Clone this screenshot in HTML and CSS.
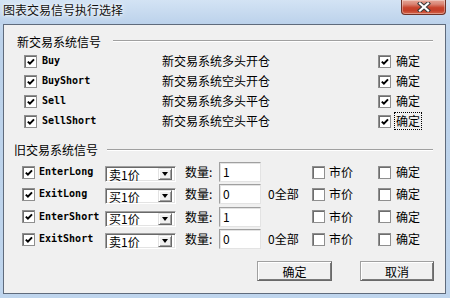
FILE: index.html
```html
<!DOCTYPE html>
<html>
<head>
<meta charset="utf-8">
<link rel="stylesheet" href="styles.css">
</head>
<body>
<div class="window">
  <div class="titlebar">
    <span class="title">图表交易信号执行选择</span>
    <div class="close">
      <svg width="14" height="10" viewBox="0 0 14 10"><path d="M3 1.5 L11 8.5 M11 1.5 L3 8.5" stroke="#3b3b3b" stroke-width="4.2" stroke-linecap="square" fill="none"/><path d="M3 1.5 L11 8.5 M11 1.5 L3 8.5" stroke="#fff" stroke-width="2.2" stroke-linecap="square" fill="none"/></svg>
    </div>
  </div>
  <div class="client">
    <div class="group-head g1"><span class="glabel">新交易系统信号</span><span class="gline"></span></div>
    <div class="new-rows">
      <span class="cb on"></span><span class="mono">Buy</span><span>新交易系统多头开仓</span><span class="cb on"></span><span>确定</span>
      <span class="cb on"></span><span class="mono">BuyShort</span><span>新交易系统空头开仓</span><span class="cb on"></span><span>确定</span>
      <span class="cb on"></span><span class="mono">Sell</span><span>新交易系统多头平仓</span><span class="cb on"></span><span>确定</span>
      <span class="cb on"></span><span class="mono">SellShort</span><span>新交易系统空头平仓</span><span class="cb on"></span><span class="focus">确定</span>
    </div>
    <div class="group-head g2"><span class="glabel">旧交易系统信号</span><span class="gline"></span></div>
    <div class="old-rows">
      <span class="cb on"></span><span class="mono">EnterLong</span>
      <span class="combo"><span class="ctext">卖1价</span><span class="cbtn"></span></span>
      <span class="qlabel">数量:</span><span class="edit">1</span><span></span>
      <span class="cb"></span><span>市价</span><span class="cb"></span><span>确定</span>

      <span class="cb on"></span><span class="mono">ExitLong</span>
      <span class="combo"><span class="ctext">买1价</span><span class="cbtn"></span></span>
      <span class="qlabel">数量:</span><span class="edit">0</span><span class="all">0全部</span>
      <span class="cb"></span><span>市价</span><span class="cb"></span><span>确定</span>

      <span class="cb on"></span><span class="mono">EnterShort</span>
      <span class="combo"><span class="ctext">买1价</span><span class="cbtn"></span></span>
      <span class="qlabel">数量:</span><span class="edit">1</span><span></span>
      <span class="cb"></span><span>市价</span><span class="cb"></span><span>确定</span>

      <span class="cb on"></span><span class="mono">ExitShort</span>
      <span class="combo"><span class="ctext">卖1价</span><span class="cbtn"></span></span>
      <span class="qlabel">数量:</span><span class="edit">0</span><span class="all">0全部</span>
      <span class="cb"></span><span>市价</span><span class="cb"></span><span>确定</span>
    </div>
    <div class="buttons">
      <span class="btn">确定</span>
      <span class="btn">取消</span>
    </div>
  </div>
</div>
</body>
</html>
```
FILE: styles.css
```css
* { box-sizing: border-box; }
html, body { margin: 0; padding: 0; }
body {
  width: 450px; height: 298px; overflow: hidden;
  font-family: "Noto Sans CJK SC", "Liberation Sans", sans-serif;
  font-size: 12px; color: #000;
}
.window {
  width: 450px; height: 298px;
  display: flex; flex-direction: column;
  background: linear-gradient(to bottom, #c9dcf1 0px, #bcd2ea 40px, #bfd5ed 100%);
}
.titlebar {
  height: 24px; flex: none;
  display: flex; justify-content: space-between; align-items: flex-start;
  background: linear-gradient(to bottom, #d3e3f4, #bcd2eb);
}
.title {
  padding: 3px 0 0 3px;
  line-height: 14px;
  color: #111;
  text-shadow: 0 0 6px #fff, 0 0 3px #fff;
}
.close {
  width: 45px; height: 15px; margin-right: 4px;
  border: 1px solid #6e3227; border-top: none;
  border-radius: 0 0 4px 4px;
  background: linear-gradient(to bottom, #e6a898 0%, #d98474 30%, #c8432c 55%, #c4402a 75%, #d4654a 100%);
  display: flex; align-items: center; justify-content: center;
  box-shadow: inset 0 0 0 1px rgba(255,255,255,0.35);
}
.client {
  flex: 1;
  margin: 0 4px 4px 3px;
  border: 1px solid #5f6b7c;
  background: #f0f0f0;
  display: flex; flex-direction: column;
}
.group-head {
  display: flex; align-items: center; height: 12px; line-height: 12px;
}
.g1 { margin-top: 11px; padding-left: 13px; }
.g2 { margin-top: 13px; padding-left: 10px; }
.gline {
  flex: 1; height: 2px;
  border-top: 1px solid #a0a0a0; border-bottom: 1px solid #fff;
  margin-right: 12px;
}
.g1 .gline { margin-left: 12px; margin-top: -3px; }
.g2 .gline { margin-left: 9px; margin-top: -1px; }

.new-rows {
  margin-top: 3px; padding-left: 20px;
  display: grid;
  grid-template-columns: 18px 120px 216px 18px auto;
  grid-auto-rows: 20px;
  align-items: center;
  justify-items: start;
  line-height: 14px;
}
.mono {
  font-family: "DejaVu Sans Mono", "Liberation Mono", monospace;
  font-weight: bold; font-size: 10px;
}
.cb {
  width: 13px; height: 13px;
  border: 1px solid #8f8f8f;
  box-shadow: inset 1px 1px 0 #6d6d6d;
  background: #fff;
  position: relative;
}
.cb.on::after {
  content: "";
  position: absolute; left: 2px; top: 2px; width: 8px; height: 8px;
  background: url("data:image/svg+xml;utf8,<svg xmlns='http://www.w3.org/2000/svg' width='8' height='8' viewBox='0 0 8 8'><path d='M0.8 3.6 L2.9 5.6 L7 1.4' stroke='black' stroke-width='2' fill='none'/></svg>") no-repeat;
}
.focus { outline: 1px dotted #000; outline-offset: 1px; }

.old-rows {
  margin-top: 5px; padding-left: 18px;
  display: grid;
  grid-template-columns: 17px 66px 71px 43px 42px 51px 17px 49px 18px auto;
  grid-template-rows: 22px 22px 23px 22px;
  align-items: center;
  justify-items: start;
  line-height: 14px;
}
.combo {
  width: 71px; height: 16px; margin-top: 4px;
  background: #fff;
  border: 1px solid #a0a0a0;
  border-right-color: #fff; border-bottom-color: #fff;
  box-shadow: inset 1px 1px 0 #696969, inset -1px -1px 0 #e3e3e3;
  display: flex; align-items: center; justify-content: space-between;
  padding: 1px 3px 1px 2px;
}
.ctext { line-height: 13px; padding-left: 1px; }
.cbtn {
  width: 14px; height: 12px;
  background: #f0f0f0;
  border: 1px solid;
  border-color: #e3e3e3 #696969 #696969 #e3e3e3;
  box-shadow: inset 1px 1px 0 #fff, inset -1px -1px 0 #a0a0a0;
  position: relative;
}
.cbtn::after {
  content: ""; position: absolute; left: 3px; top: 3px;
  border-left: 3.5px solid transparent; border-right: 3.5px solid transparent;
  border-top: 4px solid #000;
}
.qlabel { padding-left: 9px; }
.edit {
  width: 42px; height: 20px;
  background: #fff;
  border: 1px solid;
  border-color: #a0a0a0 #e3e3e3 #e3e3e3 #a0a0a0;
  box-shadow: inset 1px 1px 0 #e3e3e3;
  padding: 2px 0 0 3px;
  line-height: 14px;
}
.all { padding-left: 7px; }

.buttons {
  margin-top: 11px; padding-right: 11px;
  display: flex; justify-content: flex-end; gap: 28px;
}
.btn {
  width: 75px; height: 20px;
  display: flex; align-items: center; justify-content: center;
  background: #f0f0f0;
  border: 1px solid;
  border-color: #a0a0a0 #696969 #696969 #a0a0a0;
  box-shadow: inset 1px 1px 0 #fff, inset -1px -1px 0 #7a7a7a;
}
.btn + .btn { width: 74px; }
```
